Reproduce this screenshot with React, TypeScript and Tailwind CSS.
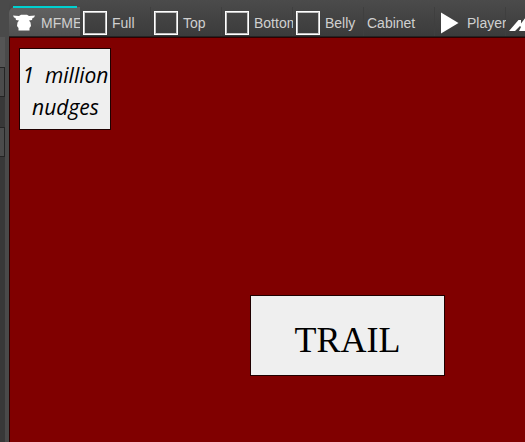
import { useState } from "react";
import type { ReactNode } from "react";
import { clsx } from "clsx";

interface Tab {
  id: string;
  label?: string;
  icon?: ReactNode;
}

function BoxIcon() {
  return (
    <svg className="size-6 shrink-0" viewBox="0 0 24 24" fill="none" aria-hidden="true">
      <rect x="0.5" y="0.5" width="23" height="23" stroke="#ffffff" />
      <rect x="1.5" y="1.5" width="21" height="21" stroke="#c4c4c4" />
    </svg>
  );
}

function MachineIcon() {
  return (
    <svg className="size-6 shrink-0" viewBox="0 0 24 24" fill="#ffffff" aria-hidden="true">
      <path d="M1 4.500 L7 5 L9 3.800 H15 L17 5 L23 4.500 L22 6.500 L20.500 7 L20 9 L17 9.500 L18.500 11.500 L19 15 L17.500 17 L17.500 19.500 H6.500 L6.500 17 L5 15 L5.500 11.500 L7 9.500 L4 9 L3.500 7 L2 6.500 Z" />
    </svg>
  );
}

function PlayIcon() {
  return (
    <svg className="size-6 shrink-0" viewBox="0 0 24 24" fill="#ffffff" aria-hidden="true">
      <path d="M3 1.500 L20.500 12 L3 22.500 Z" />
    </svg>
  );
}

function SlashIcon() {
  return (
    <svg className="size-6 shrink-0" viewBox="0 0 24 24" fill="#ffffff" aria-hidden="true">
      <path d="M0 20 L9.500 9 H12 L12 12.500 L17 6 V20 H10 L12 16 L11 15 L6 20 Z" />
    </svg>
  );
}

const tabs: Tab[] = [
  { id: "mfme", label: "MFME", icon: <MachineIcon /> },
  { id: "full", label: "Full", icon: <BoxIcon /> },
  { id: "top", label: "Top", icon: <BoxIcon /> },
  { id: "bottom", label: "Bottom", icon: <BoxIcon /> },
  { id: "belly", label: "Belly", icon: <BoxIcon /> },
  { id: "cabinet", label: "Cabinet" },
  { id: "player", label: "Player", icon: <PlayIcon /> },
  { id: "animation", icon: <SlashIcon /> },
];

function TabBar({ active, onSelect }: { active: string; onSelect: (id: string) => void }) {
  return (
    <div
      role="tablist"
      className="flex h-[37px] items-end overflow-hidden border-b border-[#242424] bg-linear-to-b from-[#4b4b4b] to-[#3b3b3b]"
    >
      {tabs.map((tab) => {
        const selected = tab.id === active;
        return (
          <button
            key={tab.id}
            type="button"
            role="tab"
            aria-label={tab.label ?? tab.id}
            aria-selected={selected}
            onClick={() => onSelect(tab.id)}
            className={clsx(
              "flex h-[29px] w-[71px] shrink-0 items-center gap-[5px] overflow-hidden pt-[3px] pl-[3px] text-sm whitespace-nowrap text-[#d0d0d0]",
              selected
                ? "rounded-tl-md bg-linear-to-b from-[#626262] to-[#505050]"
                : "shadow-[inset_-1px_0_0_#3f3f3f]"
            )}
          >
            {tab.icon}
            {tab.label && <span>{tab.label}</span>}
          </button>
        );
      })}
    </div>
  );
}

// sliver of the docked panel to the left of the editor
function SidePanel() {
  return (
    <aside className="flex w-[9px] shrink-0 flex-col bg-[#4a4a4a] pt-[37px]">
      <div className="flex w-[5px] grow flex-col bg-[#383838]">
        <div className="h-[30px] bg-[#555555]" />
        <div className="h-[30px] border-y border-r border-[#242424] bg-[#4b4b4b]" />
        <div className="h-[30px]" />
        <div className="h-[30px] border-y border-r border-[#242424] bg-[#4b4b4b]" />
      </div>
    </aside>
  );
}

export default function App() {
  const [active, setActive] = useState("mfme");

  return (
    <div className="flex h-screen overflow-hidden bg-[#4a4a4a] font-['Liberation_Sans',Arial,sans-serif]">
      <SidePanel />
      <div className="relative flex min-w-0 grow flex-col">
        <TabBar active={active} onSelect={setActive} />
        <div className="absolute top-[6px] left-1 h-[2px] w-16 bg-[#00d0d0]" />

        <main className="relative grow overflow-hidden border-t border-l border-[#300000] bg-[#800000]">
          {/* lamps placed on the layout canvas */}
          <div className="absolute top-[10px] left-[9px] flex h-[82px] w-[92px] items-center justify-center border border-[#200000] bg-[#efefef] text-center font-['Comic_Sans_MS','Open_Sans',cursive] text-[21px] leading-8 font-medium text-black italic">
            <p className="pt-1 pl-px whitespace-pre">{"1  million\nnudges"}</p>
          </div>
          <div className="absolute top-[257px] left-[240px] flex h-[81px] w-[195px] items-center justify-center border border-[#200000] bg-[#efefef] font-['Liberation_Serif','Times_New_Roman',serif] text-4xl text-black">
            <p className="pt-2">TRAIL</p>
          </div>
        </main>
      </div>
    </div>
  );
}
